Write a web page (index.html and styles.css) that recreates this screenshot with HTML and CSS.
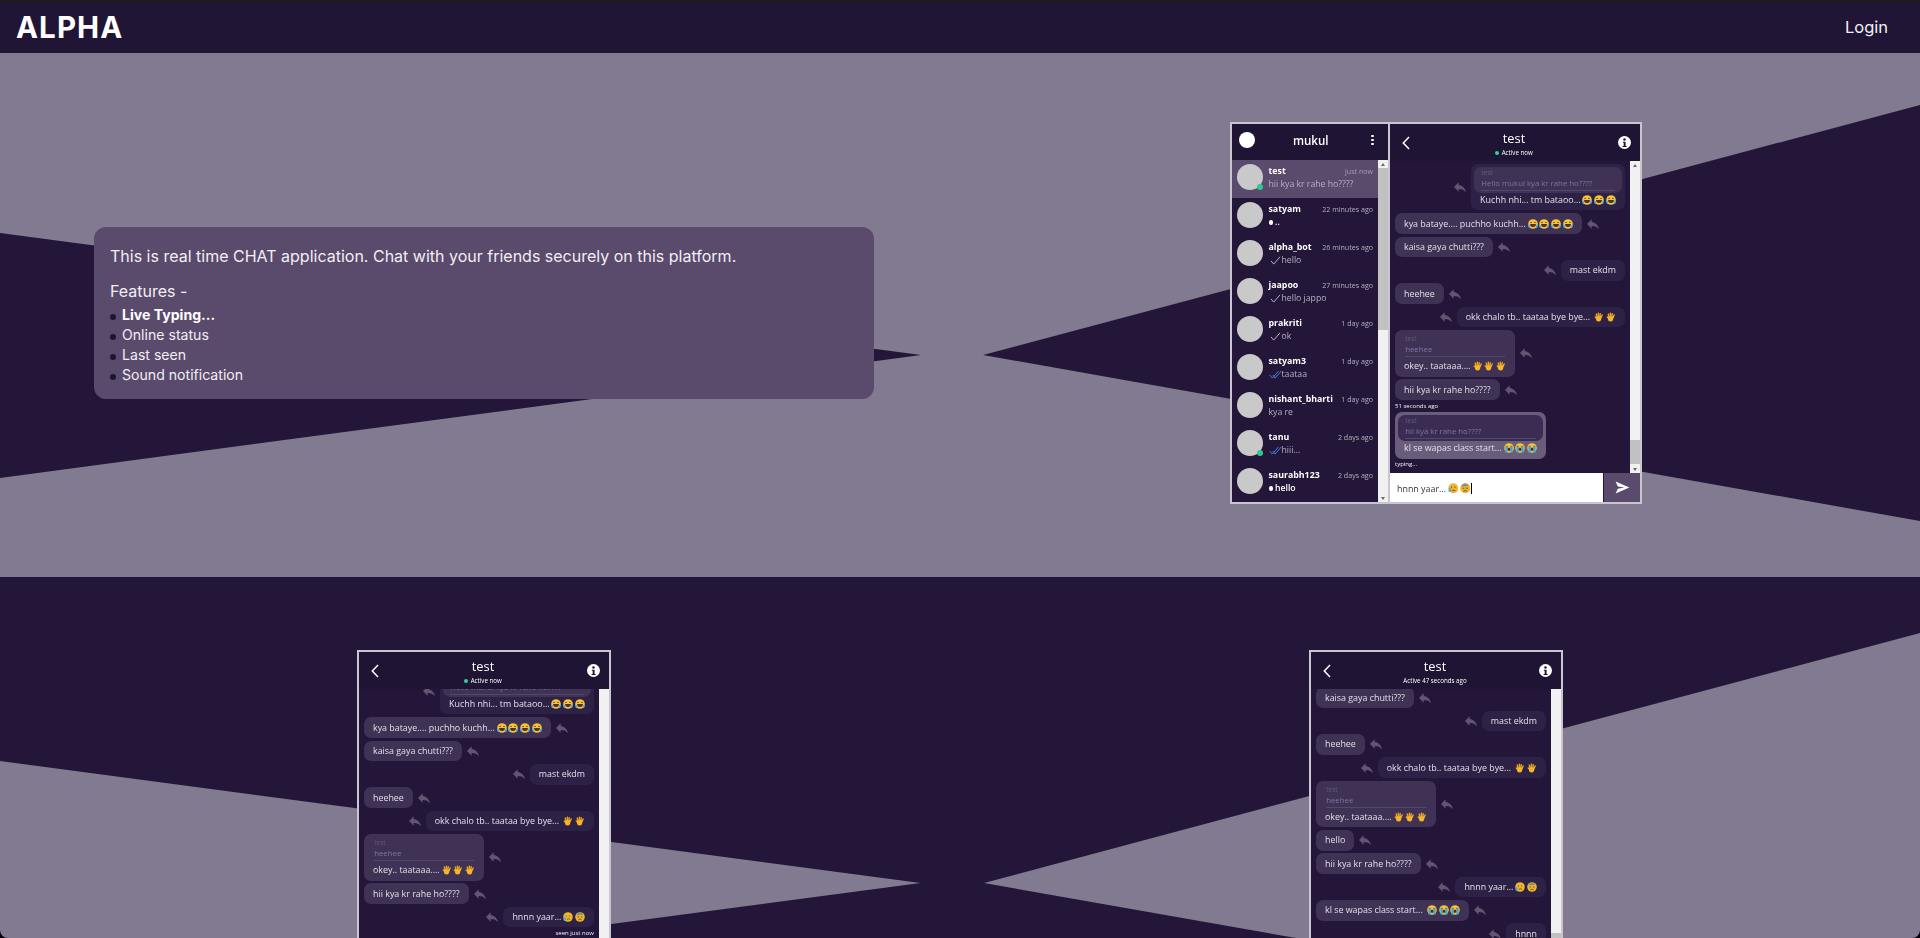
FILE: index.html
```html
<!DOCTYPE html>
<html lang="en">
<head>
  <meta charset="UTF-8">
  <meta name="viewport" content="width=device-width, initial-scale=1.0">
  <title>ALPHA</title>
  <link rel="stylesheet" href="styles.css">
</head>
<body>

  <!-- Icon sprite -->
  <svg class="sprite" xmlns="http://www.w3.org/2000/svg">
    <symbol id="i-reply" viewBox="0 0 24 24"><path d="M10 9V5l-7 7 7 7v-4.1c5 0 8.5 1.6 11 5.1-1-5-4-10-11-11z"/></symbol>
    <symbol id="i-send" viewBox="0 0 24 24"><path d="M1 21.5 23 12 1 2.5l3.5 7.7L15 12 4.500 13.800z"/></symbol>
    <symbol id="i-back" viewBox="0 0 8 14"><path d="M7 1 1.300 7 7 13" fill="none" stroke="#fff" stroke-width="1.500"/></symbol>
    <symbol id="i-info" viewBox="0 0 24 24"><circle cx="12" cy="12" r="12" fill="#fff"/><circle cx="12" cy="6.500" r="2.300" fill="#20143a"/><path d="M9 10.500h5v8h2v2H8.500v-2h2v-6H9z" fill="#20143a"/></symbol>
    <symbol id="i-tick" viewBox="0 0 14 10"><path d="M2 5.500 5 9 12 1" fill="none" stroke="#c9c4d2" stroke-width="1"/></symbol>
    <symbol id="i-ticks" viewBox="0 0 14 10"><path d="M.5 5.500 3.500 9 10.500 1M4 5.500 6.500 9 13.500 1" fill="none" stroke="#3f7fe0" stroke-width="1.100"/></symbol>
    <symbol id="e-laugh" viewBox="0 0 24 24"><circle cx="12" cy="12" r="11.500" fill="#f3c33a"/><path d="M5 9q2-3 4.500 0M14.500 9q2.500-3 4.500 0" fill="none" stroke="#5b3a12" stroke-width="1.800"/><path d="M5 12h14q0 7-7 7t-7-7z" fill="#5b2a1a"/><path d="M0 13q3 0 5.500 4 1 3-2 5-4-3-3.500-9zM24 13q-3 0-5.500 4-1 3 2 5 4-3 3.500-9z" fill="#45aee8"/></symbol>
    <symbol id="e-hand" viewBox="0 0 24 24"><g stroke="#e9a51f" stroke-width="3.400" stroke-linecap="round"><path d="M7 12 5.500 5M10.500 11V3M14 11l1-7M17 13l2.500-6M6 15l-3-3"/></g><path d="M5.500 11h12.500l-1 8q-2 4-6 4-6 0-6.500-6z" fill="#f7b52c"/></symbol>
    <symbol id="e-sob" viewBox="0 0 24 24"><circle cx="12" cy="12" r="11.500" fill="#f3c33a"/><path d="M4 8h5M15 8h5" stroke="#5b3a12" stroke-width="1.800"/><path d="M3.500 9h5.500v14H3.500zM15 9h5.500v14H15z" fill="#3ba7e6"/><ellipse cx="12" cy="15" rx="3" ry="4" fill="#5b2a1a"/></symbol>
    <symbol id="e-sad" viewBox="0 0 24 24"><circle cx="12" cy="12" r="11.500" fill="#f0b42e"/><circle cx="8" cy="9.500" r="1.300" fill="#5b3a12"/><circle cx="16" cy="9.500" r="1.300" fill="#5b3a12"/><path d="M9 18q4-4 8 0" fill="none" stroke="#5b3a12" stroke-width="1.800"/><path d="M5 10q3 5 2 8-3 4-6 1-1-2 4-9z" fill="#45aee8"/></symbol>
    <symbol id="e-sweat" viewBox="0 0 24 24"><circle cx="12" cy="12" r="11.500" fill="#f0b42e"/><path d="M3 8q4-8 9-7 5 0 8 6z" fill="#7d8f8f"/><path d="M6 12h4M14 12h4" stroke="#5b3a12" stroke-width="1.800"/><path d="M8 19q4-4 8 0" fill="none" stroke="#5b3a12" stroke-width="1.800"/></symbol>
  </svg>

  <div class="page">

    <header class="topbar">
      <a class="brand">ALPHA</a>
      <a class="login">Login</a>
    </header>

    <!-- Intro -->
    <section class="hero">
      <div class="intro">
        <p class="intro-lead">This is real time CHAT application. Chat with your friends securely on this platform.</p>
        <p class="intro-title">Features -</p>
        <ul class="intro-list">
          <li><b>Live Typing...</b></li>
          <li>Online status</li>
          <li>Last seen</li>
          <li>Sound notification</li>
        </ul>
      </div>

      <div class="shot shot-wide">
        <!-- Conversations -->
        <div class="sidebar">
          <div class="side-head">
            <span class="me"></span>
            <span class="me-name">mukul</span>
            <span class="kebab"><i></i><i></i><i></i></span>
          </div>
          <div class="side-body">
            <div class="convs">
              <div class="conv active">
                <div class="avatar online"></div>
                <div class="conv-main">
                  <div class="conv-top"><b>test</b><time>just now</time></div>
                  <div class="conv-sub">hii kya kr rahe ho????</div>
                </div>
              </div>
              <div class="conv">
                <div class="avatar"></div>
                <div class="conv-main">
                  <div class="conv-top"><b>satyam</b><time>22 minutes ago</time></div>
                  <div class="conv-sub unread"><span class="dot"></span>..</div>
                </div>
              </div>
              <div class="conv">
                <div class="avatar"></div>
                <div class="conv-main">
                  <div class="conv-top"><b>alpha_bot</b><time>26 minutes ago</time></div>
                  <div class="conv-sub"><svg class="tick"><use href="#i-tick"/></svg>hello</div>
                </div>
              </div>
              <div class="conv">
                <div class="avatar"></div>
                <div class="conv-main">
                  <div class="conv-top"><b>jaapoo</b><time>27 minutes ago</time></div>
                  <div class="conv-sub"><svg class="tick"><use href="#i-tick"/></svg>hello jappo</div>
                </div>
              </div>
              <div class="conv">
                <div class="avatar"></div>
                <div class="conv-main">
                  <div class="conv-top"><b>prakriti</b><time>1 day ago</time></div>
                  <div class="conv-sub"><svg class="tick"><use href="#i-tick"/></svg>ok</div>
                </div>
              </div>
              <div class="conv">
                <div class="avatar"></div>
                <div class="conv-main">
                  <div class="conv-top"><b>satyam3</b><time>1 day ago</time></div>
                  <div class="conv-sub"><svg class="tick"><use href="#i-ticks"/></svg>taataa</div>
                </div>
              </div>
              <div class="conv">
                <div class="avatar"></div>
                <div class="conv-main">
                  <div class="conv-top"><b>nishant_bharti</b><time>1 day ago</time></div>
                  <div class="conv-sub">kya re</div>
                </div>
              </div>
              <div class="conv">
                <div class="avatar online"></div>
                <div class="conv-main">
                  <div class="conv-top"><b>tanu</b><time>2 days ago</time></div>
                  <div class="conv-sub"><svg class="tick"><use href="#i-ticks"/></svg>hiii...</div>
                </div>
              </div>
              <div class="conv">
                <div class="avatar"></div>
                <div class="conv-main">
                  <div class="conv-top"><b>saurabh123</b><time>2 days ago</time></div>
                  <div class="conv-sub unread"><span class="dot"></span>hello</div>
                </div>
              </div>
            </div>
            <div class="scrollbar">
              <span class="arrow up"></span>
              <div class="track"><div class="thumb thumb-side"></div></div>
              <span class="arrow down"></span>
            </div>
          </div>
        </div>

        <!-- Open chat -->
        <div class="chat">
          <div class="chat-head">
            <svg class="back"><use href="#i-back"/></svg>
            <div class="chat-title">
              <div class="chat-name">test</div>
              <div class="chat-status"><span class="status-dot"></span>Active now</div>
            </div>
            <svg class="info"><use href="#i-info"/></svg>
          </div>
          <div class="chat-body">
            <div class="msgs">
              <div class="msg out">
                <svg class="reply"><use href="#i-reply"/></svg>
                <div class="bubble has-quote">
                  <div class="quote"><div class="quote-name">test</div><div class="quote-text">Hello mukul kya kr rahe ho????</div></div>
                  <div class="bubble-text">Kuchh nhi... tm bataoo...<svg class="emoji"><use href="#e-laugh"/></svg><svg class="emoji"><use href="#e-laugh"/></svg><svg class="emoji"><use href="#e-laugh"/></svg></div>
                </div>
              </div>
              <div class="msg in">
                <div class="bubble">kya bataye.... puchho kuchh...<svg class="emoji"><use href="#e-laugh"/></svg><svg class="emoji"><use href="#e-laugh"/></svg><svg class="emoji"><use href="#e-laugh"/></svg><svg class="emoji"><use href="#e-laugh"/></svg></div>
                <svg class="reply"><use href="#i-reply"/></svg>
              </div>
              <div class="msg in">
                <div class="bubble">kaisa gaya chutti???</div>
                <svg class="reply"><use href="#i-reply"/></svg>
              </div>
              <div class="msg out">
                <svg class="reply"><use href="#i-reply"/></svg>
                <div class="bubble">mast ekdm</div>
              </div>
              <div class="msg in">
                <div class="bubble">heehee</div>
                <svg class="reply"><use href="#i-reply"/></svg>
              </div>
              <div class="msg out">
                <svg class="reply"><use href="#i-reply"/></svg>
                <div class="bubble">okk chalo tb.. taataa bye bye... <svg class="emoji"><use href="#e-hand"/></svg><svg class="emoji"><use href="#e-hand"/></svg></div>
              </div>
              <div class="msg in">
                <div class="bubble has-quote">
                  <div class="quote"><div class="quote-name">test</div><div class="quote-text">heehee</div></div>
                  <div class="bubble-text">okey.. taataaa....<svg class="emoji"><use href="#e-hand"/></svg><svg class="emoji"><use href="#e-hand"/></svg><svg class="emoji"><use href="#e-hand"/></svg></div>
                </div>
                <svg class="reply"><use href="#i-reply"/></svg>
              </div>
              <div class="msg in">
                <div class="bubble">hii kya kr rahe ho????</div>
                <svg class="reply"><use href="#i-reply"/></svg>
              </div>
              <div class="caption">51 seconds ago</div>
              <div class="msg in">
                <div class="bubble has-quote draft">
                  <div class="quote"><div class="quote-name">test</div><div class="quote-text">hii kya kr rahe ho????</div></div>
                  <div class="bubble-text">kl se wapas class start...<svg class="emoji"><use href="#e-sob"/></svg><svg class="emoji"><use href="#e-sob"/></svg><svg class="emoji"><use href="#e-sob"/></svg></div>
                </div>
              </div>
              <div class="caption">typing...</div>
            </div>
            <div class="scrollbar">
              <span class="arrow up"></span>
              <div class="track"><div class="thumb thumb-chat"></div></div>
              <span class="arrow down"></span>
            </div>
          </div>
          <div class="composer">
            <div class="composer-input">hnnn yaar...<svg class="emoji"><use href="#e-sad"/></svg><svg class="emoji"><use href="#e-sweat"/></svg><span class="caret"></span></div>
            <div class="composer-send"><svg class="send"><use href="#i-send"/></svg></div>
          </div>
        </div>
      </div>
    </section>

    <!-- More screens -->
    <section class="gallery">
      <div class="shot">
        <div class="chat">
          <div class="chat-head">
            <svg class="back"><use href="#i-back"/></svg>
            <div class="chat-title">
              <div class="chat-name">test</div>
              <div class="chat-status"><span class="status-dot"></span>Active now</div>
            </div>
            <svg class="info"><use href="#i-info"/></svg>
          </div>
          <div class="chat-body">
            <div class="msgs">
              <div class="msg out msgs-scrolled-a">
                <svg class="reply"><use href="#i-reply"/></svg>
                <div class="bubble has-quote">
                  <div class="quote"><div class="quote-name">test</div><div class="quote-text">Hello mukul kya kr rahe ho????</div></div>
                  <div class="bubble-text">Kuchh nhi... tm bataoo...<svg class="emoji"><use href="#e-laugh"/></svg><svg class="emoji"><use href="#e-laugh"/></svg><svg class="emoji"><use href="#e-laugh"/></svg></div>
                </div>
              </div>
              <div class="msg in">
                <div class="bubble">kya bataye.... puchho kuchh...<svg class="emoji"><use href="#e-laugh"/></svg><svg class="emoji"><use href="#e-laugh"/></svg><svg class="emoji"><use href="#e-laugh"/></svg><svg class="emoji"><use href="#e-laugh"/></svg></div>
                <svg class="reply"><use href="#i-reply"/></svg>
              </div>
              <div class="msg in">
                <div class="bubble">kaisa gaya chutti???</div>
                <svg class="reply"><use href="#i-reply"/></svg>
              </div>
              <div class="msg out">
                <svg class="reply"><use href="#i-reply"/></svg>
                <div class="bubble">mast ekdm</div>
              </div>
              <div class="msg in">
                <div class="bubble">heehee</div>
                <svg class="reply"><use href="#i-reply"/></svg>
              </div>
              <div class="msg out">
                <svg class="reply"><use href="#i-reply"/></svg>
                <div class="bubble">okk chalo tb.. taataa bye bye... <svg class="emoji"><use href="#e-hand"/></svg><svg class="emoji"><use href="#e-hand"/></svg></div>
              </div>
              <div class="msg in">
                <div class="bubble has-quote">
                  <div class="quote"><div class="quote-name">test</div><div class="quote-text">heehee</div></div>
                  <div class="bubble-text">okey.. taataaa....<svg class="emoji"><use href="#e-hand"/></svg><svg class="emoji"><use href="#e-hand"/></svg><svg class="emoji"><use href="#e-hand"/></svg></div>
                </div>
                <svg class="reply"><use href="#i-reply"/></svg>
              </div>
              <div class="msg in">
                <div class="bubble">hii kya kr rahe ho????</div>
                <svg class="reply"><use href="#i-reply"/></svg>
              </div>
              <div class="msg out">
                <svg class="reply"><use href="#i-reply"/></svg>
                <div class="bubble">hnnn yaar...<svg class="emoji"><use href="#e-sad"/></svg><svg class="emoji"><use href="#e-sweat"/></svg></div>
              </div>
              <div class="caption caption-right">seen just now</div>
            </div>
            <div class="scrollbar">
              <div class="track"></div>
            </div>
          </div>
        </div>
      </div>

      <div class="shot">
        <div class="chat">
          <div class="chat-head">
            <svg class="back"><use href="#i-back"/></svg>
            <div class="chat-title">
              <div class="chat-name">test</div>
              <div class="chat-status">Active 47 seconds ago</div>
            </div>
            <svg class="info"><use href="#i-info"/></svg>
          </div>
          <div class="chat-body">
            <div class="msgs">
              <div class="msg in msgs-scrolled-b">
                <div class="bubble">kaisa gaya chutti???</div>
                <svg class="reply"><use href="#i-reply"/></svg>
              </div>
              <div class="msg out">
                <svg class="reply"><use href="#i-reply"/></svg>
                <div class="bubble">mast ekdm</div>
              </div>
              <div class="msg in">
                <div class="bubble">heehee</div>
                <svg class="reply"><use href="#i-reply"/></svg>
              </div>
              <div class="msg out">
                <svg class="reply"><use href="#i-reply"/></svg>
                <div class="bubble">okk chalo tb.. taataa bye bye... <svg class="emoji"><use href="#e-hand"/></svg><svg class="emoji"><use href="#e-hand"/></svg></div>
              </div>
              <div class="msg in">
                <div class="bubble has-quote">
                  <div class="quote"><div class="quote-name">test</div><div class="quote-text">heehee</div></div>
                  <div class="bubble-text">okey.. taataaa....<svg class="emoji"><use href="#e-hand"/></svg><svg class="emoji"><use href="#e-hand"/></svg><svg class="emoji"><use href="#e-hand"/></svg></div>
                </div>
                <svg class="reply"><use href="#i-reply"/></svg>
              </div>
              <div class="msg in">
                <div class="bubble">hello</div>
                <svg class="reply"><use href="#i-reply"/></svg>
              </div>
              <div class="msg in">
                <div class="bubble">hii kya kr rahe ho????</div>
                <svg class="reply"><use href="#i-reply"/></svg>
              </div>
              <div class="msg out">
                <svg class="reply"><use href="#i-reply"/></svg>
                <div class="bubble">hnnn yaar...<svg class="emoji"><use href="#e-sad"/></svg><svg class="emoji"><use href="#e-sweat"/></svg></div>
              </div>
              <div class="msg in">
                <div class="bubble">kl se wapas class start... <svg class="emoji"><use href="#e-sob"/></svg><svg class="emoji"><use href="#e-sob"/></svg><svg class="emoji"><use href="#e-sob"/></svg></div>
                <svg class="reply"><use href="#i-reply"/></svg>
              </div>
              <div class="msg out">
                <svg class="reply"><use href="#i-reply"/></svg>
                <div class="bubble">hnnn</div>
              </div>
            </div>
            <div class="scrollbar">
              <div class="track"><div class="thumb thumb-gallery"></div></div>
            </div>
          </div>
        </div>
      </div>
    </section>

  </div>

</body>
</html>
```

FILE: styles.css
```css
body, html {
  margin: 0;
  padding: 0;
  height: 100%;
  background-color: #000;
  overflow: hidden;
}

.sprite {
  display: none;
}

.page {
  height: 938px;
  overflow: hidden;
  border-radius: 0 0 8px 8px;
  font-family: Inter, 'Noto Sans', sans-serif;
}

/* Top bar */
.topbar {
  height: 53px;
  box-sizing: border-box;
  border-top: 2px solid #1b1a1e;
  background-color: #201535;
  display: flex;
  justify-content: space-between;
  align-items: center;
  padding: 0 32px 2px 16px;
  color: #fff;
}

.brand {
  font-size: 29.5px;
  font-weight: 700;
  letter-spacing: 1.1px;
}

.login {
  font-size: 16.5px;
  color: #f2f0f5;
}

/* Hero */
.hero {
  height: 524px;
  box-sizing: border-box;
  padding: 0 278px 4px 94px;
  display: flex;
  justify-content: space-between;
  align-items: center;
  background: #817a90 url("data:image/svg+xml,%3Csvg xmlns='http://www.w3.org/2000/svg' viewBox='0 0 1920 524' preserveAspectRatio='none'%3E%3Cpath fill='%23231638' d='M0 180 921 302 0 425zM1920 52 983 302 1920 468z'/%3E%3C/svg%3E") no-repeat;
  background-size: 100% 100%;
}

.intro {
  width: 780px;
  box-sizing: border-box;
  padding: 18px 16px 14px;
  background-color: #5a4a6c;
  border-radius: 12px;
  color: #f1eff4;
}

.intro-lead {
  margin: 0 0 13px;
  font-size: 16px;
  line-height: 22px;
}

.intro-title {
  margin: 0;
  font-size: 16px;
  line-height: 22px;
}

.intro-list {
  margin: 3px 0 0;
  padding: 0;
  list-style: none;
  font-size: 14.1px;
  line-height: 20px;
}

.intro-list li {
  display: flex;
  align-items: center;
  gap: 6px;
}

.intro-list li::before {
  content: '';
  width: 6px;
  height: 6px;
  margin-top: 4px;
  border-radius: 50%;
  background-color: #1d1533;
}

.intro-list b {
  color: #fff;
}

/* Gallery */
.gallery {
  height: 361px;
  box-sizing: border-box;
  padding-top: 73px;
  display: flex;
  justify-content: center;
  gap: 698px;
  overflow: hidden;
  background: #231638 url("data:image/svg+xml,%3Csvg xmlns='http://www.w3.org/2000/svg' viewBox='0 0 1920 361' preserveAspectRatio='none'%3E%3Cpath fill='%23817a90' d='M0 184 920.500 306 0 428zM1920 56 984 306 1920 471z'/%3E%3C/svg%3E") no-repeat;
  background-size: 100% 100%;
}

/* App screenshots */
.shot {
  display: flex;
  gap: 2px;
  flex-shrink: 0;
  height: 382px;
  box-sizing: border-box;
  border: 2px solid #c9c6d1;
  background-color: #c9c6d1;
  font-family: 'Open Sans', 'Noto Sans', sans-serif;
  filter: blur(0.25px);
}

.sidebar {
  width: 156px;
  display: flex;
  flex-direction: column;
  background-color: #231638;
}

.side-head {
  height: 36px;
  box-sizing: border-box;
  flex-shrink: 0;
  display: flex;
  align-items: center;
  justify-content: space-between;
  padding: 0 14px 4px 7px;
  background-color: #1f1434;
  color: #fff;
}

.me {
  width: 16px;
  height: 16px;
  border-radius: 50%;
  background-color: #fff;
}

.me-name {
  margin-right: 5px;
  font-size: 11.600px;
  font-weight: 600;
}

.kebab {
  display: flex;
  flex-direction: column;
  gap: 1.5px;
}

.kebab i {
  width: 2.500px;
  height: 2.500px;
  border-radius: 50%;
  background-color: #fff;
}

.side-body {
  flex: 1;
  display: flex;
  min-height: 0;
}

.convs {
  flex: 1;
  min-width: 0;
}

.conv {
  height: 38px;
  box-sizing: border-box;
  display: flex;
  align-items: flex-start;
  gap: 5.500px;
  padding: 4px 5px 0;
}

.conv.active {
  background-color: #5a4a6c;
}

.avatar {
  position: relative;
  width: 26px;
  height: 26px;
  flex-shrink: 0;
  border-radius: 50%;
  background-color: #c9c9c9;
}

.avatar.online::after {
  content: '';
  position: absolute;
  right: 0;
  bottom: 0;
  width: 6px;
  height: 6px;
  border-radius: 50%;
  background-color: #2ec794;
}

.conv-main {
  flex: 1;
  min-width: 0;
  padding-top: 1px;
}

.conv-top {
  display: flex;
  justify-content: space-between;
  align-items: baseline;
  font-size: 8.800px;
  line-height: 13px;
  color: #fff;
}

.conv-top time {
  font-size: 7.100px;
  color: #b5b0bd;
}

.conv.active time {
  color: #a79db3;
}

.conv-sub {
  display: flex;
  align-items: center;
  font-size: 8.700px;
  line-height: 13px;
  color: #b7b0c0;
}

.conv-sub.unread {
  color: #fff;
  font-weight: 600;
}

.dot {
  width: 4.500px;
  height: 4.500px;
  margin-right: 2px;
  border-radius: 50%;
  background-color: #fff;
}

.tick {
  width: 13px;
  height: 9px;
  flex-shrink: 0;
}

/* Scrollbar */
.scrollbar {
  width: 10px;
  flex-shrink: 0;
  display: flex;
  flex-direction: column;
  background-color: #f1f1f1;
}

.track {
  flex: 1;
  display: flex;
  flex-direction: column;
}

.thumb {
  background-color: #c1c1c1;
}

.thumb-side {
  height: 162px;
}

.thumb-chat {
  height: 24px;
  margin-top: auto;
  margin-bottom: 1px;
}

.thumb-gallery {
  height: 60px;
  margin-top: 244px;
}

.arrow {
  height: 8px;
  flex-shrink: 0;
  display: flex;
  align-items: center;
  justify-content: center;
}

.arrow::after {
  content: '';
  border: 2px solid transparent;
}

.arrow.up::after {
  border-top-width: 0;
  border-bottom: 3px solid #6a6a6a;
}

.arrow.down::after {
  border-bottom-width: 0;
  border-top: 3px solid #6a6a6a;
}

/* Chat */
.chat {
  width: 250px;
  display: flex;
  flex-direction: column;
  background-color: #231638;
}

.chat-head {
  height: 37px;
  flex-shrink: 0;
  display: flex;
  align-items: center;
  justify-content: space-between;
  padding: 0 9px 0 12px;
  background-color: #1f1434;
  color: #fff;
}

.back {
  width: 8px;
  height: 14px;
  margin-top: 1px;
}

.info {
  width: 13px;
  height: 13px;
}

.chat-title {
  text-align: center;
  padding-top: 3px;
}

.chat-name {
  font-size: 12.800px;
  line-height: 15px;
}

.chat-status {
  font-size: 6.200px;
  font-weight: 500;
  line-height: 9px;
  margin-top: 2px;
}

.status-dot {
  display: inline-block;
  width: 4px;
  height: 4px;
  margin-right: 2.500px;
  vertical-align: 0.5px;
  border-radius: 50%;
  background-color: #2fd39e;
}

.chat-body {
  flex: 1;
  min-height: 0;
  display: flex;
}

.msgs {
  flex: 1;
  min-width: 0;
  box-sizing: border-box;
  padding: 3px 5px 0;
  display: flex;
  flex-direction: column;
  gap: 2.700px;
  overflow: hidden;
}

/* these two conversations are scrolled down a bit */
.msgs-scrolled-a {
  margin-top: -24px;
}

.msgs-scrolled-b {
  margin-top: -4.700px;
}

.msg {
  display: flex;
  align-items: center;
  flex-shrink: 0;
  gap: 3px;
}

.msg.out {
  justify-content: flex-end;
}

.reply {
  width: 16px;
  height: 16px;
  flex-shrink: 0;
  fill: #615570;
}

.bubble {
  box-sizing: border-box;
  padding: 4.350px 9px;
  border-radius: 7px;
  font-size: 8.900px;
  line-height: 12px;
  white-space: nowrap;
  color: #e2dfe7;
}

.msg.in .bubble {
  background-color: #3f3255;
}

.msg.out .bubble {
  background-color: #2e2146;
}

.bubble.has-quote {
  padding: 2.700px 2.700px 4.300px;
}

.bubble-text {
  padding: 0 6.300px;
}

.quote {
  padding: 1.500px 7.500px 1.500px;
  border-radius: 7px;
  margin-bottom: 1.500px;
}

.msg.out .quote {
  background-color: #3f3255;
}

.quote-name {
  font-size: 6.500px;
  line-height: 9.500px;
  color: #655a76;
}

.quote-text {
  font-size: 7.800px;
  line-height: 11px;
  padding-bottom: 1.500px;
  border-bottom: 1px solid #544868;
  color: #8175a0;
}

.msg.in .bubble.draft {
  background-color: #6a5d7c;
}

.bubble.draft .quote {
  background-color: #3a2c52;
}

.caption {
  font-size: 6px;
  line-height: 7px;
  color: #f4f2f6;
  flex-shrink: 0;
}

.caption-right {
  text-align: right;
}

.emoji {
  width: 10px;
  height: 10px;
  margin-left: 1.800px;
  vertical-align: -2px;
}

/* Composer */
.composer {
  height: 29px;
  flex-shrink: 0;
  display: flex;
}

.composer-input {
  flex: 1;
  display: flex;
  align-items: center;
  padding: 1.500px 0 0 7px;
  background-color: #fff;
  font-size: 8.900px;
  color: #333;
}

.composer-input .emoji {
  width: 10.500px;
  height: 10.500px;
}

.caret {
  width: 1px;
  height: 11px;
  background-color: #000;
}

.composer-send {
  width: 36px;
  margin-left: 1px;
  display: flex;
  align-items: center;
  justify-content: center;
  background-color: #5a4a6c;
}

.send {
  width: 15px;
  height: 15px;
  fill: #fff;
}
```
